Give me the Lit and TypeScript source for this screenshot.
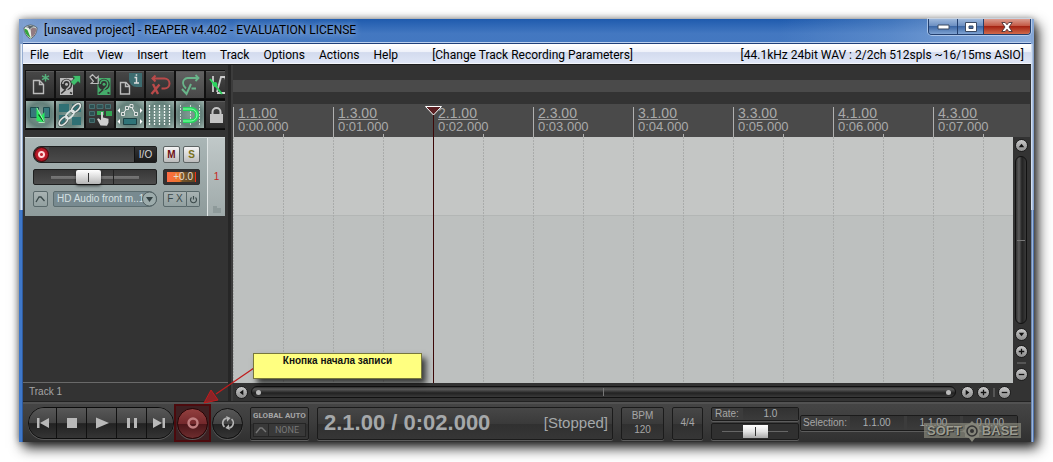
import { LitElement, html, css, svg, nothing } from "lit";
import { customElement, state } from "lit/decorators.js";

const MENUS = ["File", "Edit", "View", "Insert", "Item", "Track", "Options", "Actions", "Help"];

const MARKS = [
  ["1.1.00", "0:00.000"],
  ["1.3.00", "0:01.000"],
  ["2.1.00", "0:02.000"],
  ["2.3.00", "0:03.000"],
  ["3.1.00", "0:04.000"],
  ["3.3.00", "0:05.000"],
  ["4.1.00", "0:06.000"],
  ["4.3.00", "0:07.000"],
];

const disk = (x: number, c: string) => svg`
  <path d="M${x} 7h13v17h-13z" fill=${c}/>
  <circle cx=${x + 6.5} cy="13.5" r="5.7" fill="#333"/>
  <path d="M${x + 2.800} 13a3.700 3.700 0 0 1 7.400 0q0 2.500-2.200 4l-3.500 3.500" fill="none" stroke=${c} stroke-width="1.500"/>
  <circle cx=${x + 6.5} cy="13.200" r="1.500" fill=${c}/>
  <path d="M${x + 1.200} 22.500l4.500-4M${x + 10} 21.500l2 1" stroke="#333" stroke-width="1.600"/>`;

const TOOLS = [
  [
    { name: "New project", look: "", icon: svg`
      <path d="M7.500 9.500h6l4 4v9h-10zM13.500 9.500v4h4" fill="none" stroke="#bbb" stroke-width="1.400"/>
      <path d="M19.500 3v7.500M16 4.900l7 3.800M23 4.900l-7 3.800" stroke="#55b07c" stroke-width="1.400"/>` },
    { name: "Open project", look: "", icon: svg`${disk(4, "#b9b9b9")}
      <path d="M14.500 11L18.500 7l-2.500-2.500h8.500V13l-2.500-2.500-4 4z" fill="#3fbf6c" stroke="#333" stroke-width=".6"/>` },
    { name: "Save project", look: "", icon: svg`${disk(11.500, "#45ad6b")}
      <path d="M4 6l2.500-2.300 3.700 3.700 2-2v7.100H5.200l2.200-2.200z" fill="#333" stroke="#bbb" stroke-width="1.200"/>` },
    { name: "Project settings", look: "", icon: svg`
      <path d="M13 2h13v14h-5.500A7.500 7.500 0 0 1 13 8.500z" fill="#3d6c70"/>
      <path d="M4.500 11.500h5.500l3.500 3.500v8h-9zM9.500 11.500v4h4" fill="none" stroke="#bbb" stroke-width="1.400"/>
      <path d="M18.500 6.500h2v5M18 12h5M19.700 4h1.500" stroke="#ddd" stroke-width="1.400" fill="none"/>` },
    { name: "Undo", look: "", icon: svg`
      <path d="M6 7.500h12.500a5 5 0 0 1 0 10h-3M9.500 4.500l-3 3 3 3" fill="none" stroke="#b94a4a" stroke-width="2"/>
      <path d="M7 13l5 10M13.500 13.500L5.500 23" stroke="#b94a4a" stroke-width="2.400"/>` },
    { name: "Redo", look: "soft", icon: svg`
      <path d="M22.500 7H11.500a5 5 0 0 0-4.500 5q0 3 3 5.500M19.500 4l3 3-3 3" fill="none" stroke="#69b58a" stroke-width="1.800"/>
      <path d="M6 18l4.500 5 4.500-10M15.500 17.500h4.500" fill="none" stroke="#69b58a" stroke-width="2"/>` },
    { name: "Metronome", look: "", icon: svg`
      <path d="M7 5v16M11 21L15 6h4l5 16H11" fill="none" stroke="#ccc" stroke-width="1.800"/>
      <path d="M4 8l12 15" stroke="#2ed45f" stroke-width="2"/><circle cx="9" cy="13.500" r="2.400" fill="#2ed45f"/>` },
  ],
  [
    { name: "Auto-crossfade", look: "lit", icon: svg`
      <path d="M4.500 6.500h8v10h-8zM17.500 6.500h6v10h-6z" fill="#38777b" stroke="#1f4a4d"/>
      <path d="M10.500 6l5 8.500 3-3.500v10.500l-8-1.500z" fill="#27e85d"/>
      <path d="M12.500 13.500l6 8" stroke="#123a1c" stroke-width="1.200"/>
      <path d="M11 7l7.500 14.500h-6" fill="none" stroke="#b5ffc8" stroke-width=".8"/>` },
    { name: "Item grouping", look: "lit", icon: svg`
      <path d="M3 3h10v8H3zM16 3h9v8h-9zM3 14h6v10H3zM16 16h9v8h-9z" fill="#2f7074"/>
      <g fill="none" stroke="#4a5a57" stroke-width="3">
      <ellipse cx="20" cy="7" rx="5.500" ry="2.800" transform="rotate(-45 20 7)"/>
      <ellipse cx="7.500" cy="20" rx="5.500" ry="2.800" transform="rotate(-45 7.500 20)"/></g>
      <g fill="none" stroke="#dfe6e4" stroke-width="1.700">
      <ellipse cx="20" cy="7" rx="5.500" ry="2.800" transform="rotate(-45 20 7)"/>
      <ellipse cx="14" cy="13.500" rx="5" ry="2.600" transform="rotate(-45 14 13.500)"/>
      <ellipse cx="7.500" cy="20" rx="5.500" ry="2.800" transform="rotate(-45 7.500 20)"/></g>` },
    { name: "Ripple editing", look: "", icon: svg`
      <path d="M3.500 3.500h5v4h-5zM11 3.500h6v4h-6zM19.500 3.500h5v4h-5zM3.500 10.500h5v4h-5zM3.500 17.500h5v4h-5z" fill="#2d5052" stroke="#4c7b7c" stroke-width=".8"/>
      <path d="M11 10h7v4h-7zM20 10h6v5h-6z" fill="#34a755"/>
      <path d="M14.500 24.500l-3.500-6.500 1.500-.8 2.500 2V11h2v5.500l5.500 1.200v4l-1.500 3z" fill="#cfcfcf"/>` },
    { name: "Move envelope points", look: "lit", icon: svg`
      <path d="M7 13l4-6 4-2 4 7" fill="none" stroke="#eee" stroke-width="1"/>
      <path d="M5.500 11.500h3v3h-3zM9.500 5.500h3v3h-3zM14 3.500h3v3h-3zM18.500 11.500h3v3h-3z" fill="#5e7873" stroke="#eee" stroke-width=".9"/>
      <path d="M4 7v5L1.500 9.500zM24 7v5l2.500-2.500zM4 18v5l-2.500-2.500zM24 18v5l2.500-2.500z" fill="#fff"/>
      <path d="M7.500 17.500h13v6h-13z" fill="#2f7478" stroke="#1d4144"/>` },
    { name: "Grid lines", look: "lit", icon: svg`
      <path d="M3.500 4v21M8.500 4v21M13.500 4v21M18.500 4v21M23.500 4v21" stroke="#f2f6f4" stroke-width="1.300" stroke-dasharray="2 1"/>` },
    { name: "Snap", look: "lit", icon: svg`
      <path d="M4.500 4v21M14.500 4v21M23.500 4v21" stroke="#c8dcd2" stroke-dasharray="2 1"/>
      <path d="M7 8h8a6 6 0 0 1 0 12H7" fill="none" stroke="#22d85b" stroke-width="4"/>
      <path d="M7 8h8a6 6 0 0 1 0 12H7" fill="none" stroke="#8dffb0" stroke-width="1"/>` },
    { name: "Lock", look: "", icon: svg`
      <path d="M6.500 14v-3a4 4 0 0 1 8 0v3" fill="none" stroke="#c4c4c4" stroke-width="2"/>
      <path d="M4 13h13v9H4z" fill="#c4c4c4"/>` },
  ],
];

const TRANSPORT = [
  { name: "Go to start", icon: svg`<path d="M8 8h2.500v10H8zM20 8v10l-9-5z"/>` },
  { name: "Stop", icon: svg`<path d="M9 8h10v10H9z"/>` },
  { name: "Play", icon: svg`<path d="M8 7.500v11l13-5.500z"/>` },
  { name: "Pause", icon: svg`<path d="M9 8h3v10H9zM16 8h3v10h-3z"/>` },
  { name: "Go to end", icon: svg`<path d="M6 8v10l9-5zM15.500 8H18v10h-2.500z"/>` },
];

const GLYPHS: Record<string, string> = {
  left: "M8 3v6L4 6z",
  right: "M4 3v6l4-3z",
  up: "M3 8h6L6 4z",
  down: "M3 4h6L6 8z",
  plus: "M5.300 3h1.400v2.300H9v1.400H6.700V9H5.300V6.700H3V5.300h2.300z",
  minus: "M3 5.300h6v1.400H3z",
};

@customElement("round-button")
class RoundButton extends LitElement {
  static properties = { kind: {}, name: {} };
  kind!: string;
  name!: string;
  static styles = css`
    :host { display: flex; }
    .btn { width: 13px; height: 13px; padding: 0; border: 1px solid #1d1d1d; border-radius: 50%;
      background: linear-gradient(#c9c9c9, #8c8c8c); display: grid; place-items: center; }
    .glyph { display: block; width: 11px; height: 11px; }
  `;
  render() {
    return html`<button class="btn" aria-label=${this.name}>
      <svg class="glyph" viewBox="0 0 12 12"><path d=${GLYPHS[this.kind]} fill="#111"/></svg>
    </button>`;
  }
}

@customElement("track-panel")
class TrackPanel extends LitElement {
  static styles = css`
    :host { display: flex; height: 79px; box-sizing: border-box; border-top: 1px solid #cfd6d6;
      font: 10px/14px "Liberation Sans", Arial, sans-serif; }
    .controls { flex: 1; display: grid; grid-template-columns: 124px 37px; grid-template-rows: 17px 16px 16px;
      gap: 6px; padding: 8px 6px 9px 8px; background: linear-gradient(#aab6b6, #8e9b9b); }
    .strip { width: 18px; border-left: 1px solid #dfe5e5; background: linear-gradient(#c0c8c8, #9faaaa);
      display: flex; flex-direction: column; align-items: center; justify-content: space-between;
      padding-top: 32px; box-sizing: border-box; color: #c8241c; }
    .folder { display: block; width: 10px; height: 12px; }
    button, select, input { font: inherit; margin: 0; box-sizing: border-box; }
    .name-row { display: flex; border: 1px solid #1d1f1f; border-radius: 8px 2px 2px 8px; background: #474747; overflow: hidden; }
    .arm { width: 15px; height: 15px; padding: 0; border: 1px solid #4a0508; border-radius: 50%;
      background: radial-gradient(circle, #c22a36 0 1px, #ffd9d9 2px 3px, #bf1f2c 4px, #8f0c18); }
    .name { flex: 1; min-width: 0; border: 0; background: linear-gradient(#3a3a3a, #4b4b4b); color: #ddd; padding: 0 4px; }
    .io { width: 22px; padding: 0; border: 0; border-left: 1px solid #111; background: linear-gradient(#333, #1b1b1b); color: #d8d8d8; }
    .pair { display: flex; justify-content: space-between; }
    .square { width: 17px; padding: 0; border: 1px solid #5d6464; border-radius: 2px;
      background: linear-gradient(#f4f4f4, #bdbdbd); font-weight: bold; color: #6e1015; }
    .solo { color: #77701c; }
    .fader { appearance: none; width: 100%; height: 16px; border: 1px solid #1e2020; border-radius: 2px;
      background: linear-gradient(90deg, #222, #222) 79px 0 / 1px 100% no-repeat,
        linear-gradient(#777, #6a6a6a) 50% 50% / 88px 3px no-repeat, linear-gradient(#383838, #4d4d4d);
      padding: 0 16px 0 14px; }
    .fader::-webkit-slider-thumb { appearance: none; width: 25px; height: 14px; border: 0; border-radius: 2px;
      box-shadow: 0 2px 3px rgba(0, 0, 0, 0.6);
      background: linear-gradient(#333, #333) 50% 50% / 1px 9px no-repeat, linear-gradient(#fff, #dcdcdc 50%, #b5b5b5); }
    .meter { border: 1px solid #2b2e2e; border-radius: 2px; padding: 2px 3px; background: #343030; display: flex; }
    .level { flex: 1; border-right: 1px solid #f03018; color: #e5dccb; line-height: 10px; text-align: right; padding-right: 2px;
      background: linear-gradient(90deg, #ff6a44, #e8792c 45%, #75542a 55%, #5a4523); }
    .bottom { display: flex; gap: 5px; }
    .plain { padding: 0; border: 1px solid #59686a; border-radius: 2px; background: linear-gradient(#a9b3b3, #92a0a0); color: #3c4a4b; }
    .env { width: 15px; display: grid; place-items: center; }
    .device { position: relative; flex: 1; display: flex; min-width: 0; }
    .input { appearance: none; width: 100%; border: 1px solid #5c6d70; border-radius: 2px 8px 8px 2px;
      background: #788a90; color: #d5e0e2; padding: 0 0 0 3px; }
    .drop { position: absolute; right: 0; top: 0; pointer-events: none; width: 16px; height: 16px; }
    .fx { width: 24px; border-radius: 2px 0 0 2px; }
    .power { width: 13px; border-left: 0; border-radius: 0 2px 2px 0; display: grid; place-items: center; }
    svg { display: block; }
  `;
  render() {
    return html`
      <div class="controls">
        <div class="name-row">
          <button class="arm" aria-label="Record arm"></button>
          <input class="name" aria-label="Track name" />
          <button class="io">I/O</button>
        </div>
        <div class="pair">
          <button class="square">M</button>
          <button class="square solo">S</button>
        </div>
        <input class="fader" type="range" min="0" max="100" value="42" aria-label="Volume" />
        <div class="meter"><div class="level">+0.0</div></div>
        <div class="bottom">
          <button class="plain env" aria-label="Envelopes">
            <svg width="11" height="8" viewBox="0 0 11 8"><path d="M1 7l3-5h2l3.500 4" fill="none" stroke="#3c4a4b" stroke-width="1.300"/></svg>
          </button>
          <div class="device">
            <select class="input" aria-label="Input device"><option>HD Audio front m..1</option></select>
            <svg class="drop" viewBox="0 0 16 16"><circle cx="8.500" cy="8" r="7" fill="#9cabab" stroke="#526062"/><path d="M5 6h7l-3.500 5z" fill="#354244"/></svg>
          </div>
        </div>
        <div class="pair">
          <button class="plain fx">F X</button>
          <button class="plain power" aria-label="Bypass effects">
            <svg width="9" height="9" viewBox="0 0 9 9"><path d="M2.500 2.500a3 3 0 1 0 4 0M4.500 1v3.500" fill="none" stroke="#3c4a4b" stroke-width="1.200"/></svg>
          </button>
        </div>
      </div>
      <div class="strip">
        <span>1</span>
        <svg class="folder" viewBox="0 0 10 12"><path d="M1 2h4v2h4v5H1z" fill="#8e9a9a"/></svg>
      </div>`;
  }
}

@customElement("transport-bar")
class TransportBar extends LitElement {
  static styles = css`
    :host { display: flex; align-items: center; gap: 8px; height: 40px; box-sizing: border-box; padding: 0 13px 0 5px;
      border-top: 2px solid #525252; background: linear-gradient(#454545, #3c3c3c 50%, #303030);
      font: 10px/14px "Liberation Sans", Arial, sans-serif; color: #a6a6a6; }
    button, input { font: inherit; color: inherit; margin: 0; box-sizing: border-box; }
    .keys { display: flex; align-items: center; }
    .bank { display: flex; height: 32px; box-sizing: border-box; border: 1px solid #0d0d0d; border-radius: 16px; overflow: hidden;
      box-shadow: 0 1px #5a5a5a; }
    .key { width: 30px; padding: 0; border: 0; border-left: 1px solid #111; display: grid; place-items: center;
      background: linear-gradient(#585858, #434343 50%, #222 52%, #353535); }
    .key:first-child { border-left: 0; width: 27px; }
    .key:last-child { width: 27px; }
    .key svg { display: block; width: 28px; height: 26px; fill: #b9b9b9; }
    .frame { margin-right: 1px; width: 37px; height: 38px; box-sizing: border-box; border: 2px solid #4c0a0d; background: #3e2022; display: grid; place-items: center; }
    .round { width: 31px; height: 31px; padding: 0; border: 1px solid #111; border-radius: 50%; display: grid; place-items: center;
      background: linear-gradient(#585858, #434343 50%, #222 52%, #353535); box-shadow: 0 1px #5a5a5a; }
    .record { border-color: #260506; background: linear-gradient(#93403f, #74292c 50%, #4c1619 52%, #6e2d2f); }
    .box { box-sizing: border-box; height: 33px; border: 1px solid #1b1b1b; border-radius: 2px; box-shadow: 0 1px #5c5c5c;
      background: linear-gradient(#474747, #3a3a3a 50%, #303030 52%, #363636); }
    .auto { width: 59px; margin-left: -1px; padding: 2px; display: grid; align-content: space-between; justify-items: stretch;
      font: 700 8px/11px Roboto, sans-serif; text-align: center; white-space: nowrap; }
    .mode { padding: 0; height: 14px; border: 1px solid #252525; background: #393939; color: #777; display: flex; line-height: 12px; font-size: 9px; font-weight: 400; }
    .mode svg { width: 14px; height: 12px; border-right: 1px solid #252525; }
    .mode span { flex: 1; }
    .time { flex: 1; display: flex; justify-content: space-between; align-items: center; padding: 0 4px 0 6px; color: #a5a8aa; white-space: nowrap; }
    .clock { font-weight: bold; font-size: 22px; line-height: 28px; }
    .state { font-size: 15px; line-height: 24px; }
    .bpm { width: 43px; padding: 1px 0; display: grid; text-align: center; }
    .sig { width: 31px; padding: 0; }
    .rate { display: grid; gap: 2px; width: 88px; }
    .rate-row, .selection { box-sizing: border-box; border: 1px solid #1b1b1b; border-radius: 2px; box-shadow: 0 1px #5c5c5c; display: flex; background: #3c3c3c; }
    .rate-row { height: 14px; padding-left: 3px; line-height: 12px; gap: 4px; }
    .value { flex: 1; min-width: 0; width: 0; border: 0; padding: 0; text-align: center; background: linear-gradient(#323232, #3b3b3b); color: #a9adb0; }
    .speed { appearance: none; width: 100%; height: 17px; border: 1px solid #1b1b1b; border-radius: 2px; padding: 0 9px;
      background: linear-gradient(#666, #666) 50% 50% / 66px 1px no-repeat, #303030; box-shadow: 0 1px #5c5c5c; }
    .speed::-webkit-slider-thumb { appearance: none; width: 25px; height: 13px; border: 0;
      background: linear-gradient(#333, #333) 50% 50% / 1px 9px no-repeat, linear-gradient(#fff, #e4e4e4 50%, #aaa); }
    .selection { width: 218px; height: 16px; padding-left: 2px; gap: 3px; line-height: 14px; margin-left: -7px; }
  `;
  render() {
    return html`
      <div class="keys">
        <div class="bank">
          ${TRANSPORT.map((k) => html`<button class="key" aria-label=${k.name}><svg viewBox="0 0 28 26">${k.icon}</svg></button>`)}
        </div>
        <div class="frame">
          <button class="round record" aria-label="Record">
            <svg width="14" height="14" viewBox="0 0 14 14"><circle cx="7" cy="7" r="4.500" fill="none" stroke="#c07f80" stroke-width="2.400"/></svg>
          </button>
        </div>
        <button class="round" aria-label="Repeat">
          <svg width="16" height="16" viewBox="0 0 18 18">
            <path d="M5 13.500A6 6 0 0 1 7.500 3.300M13 4.500A6 6 0 0 1 10.500 14.700" fill="none" stroke="#b5b5b5" stroke-width="1.800"/>
            <path d="M7 1l5 2.500-4 4zM11 17l-5-2.500 4-4z" fill="#b5b5b5"/>
          </svg>
        </button>
      </div>
      <div class="box auto">
        <span>GLOBAL AUTO</span>
        <button class="mode">
          <svg viewBox="0 0 14 12"><path d="M2 9l4-5h2l4 4" fill="none" stroke="#777" stroke-width="1.400"/></svg><span>NONE</span>
        </button>
      </div>
      <div class="box time"><span class="clock">2.1.00 / 0:02.000</span><span class="state">[Stopped]</span></div>
      <div class="box bpm"><span>BPM</span><span>120</span></div>
      <button class="box sig">4/4</button>
      <div class="rate">
        <div class="rate-row"><label for="rate">Rate:</label><input class="value" id="rate" value="1.0" /></div>
        <input class="speed" type="range" min="0" max="100" value="50" aria-label="Play rate" />
      </div>
      <div class="selection">
        <label for="sel-start">Selection:</label>
        <input class="value" id="sel-start" value="1.1.00" />
        <input class="value" aria-label="Selection end" value="1.1.00" />
        <input class="value" aria-label="Selection length" value="0.0.00" />
      </div>`;
  }
}

@customElement("app-root")
class AppRoot extends LitElement {
  @state() private cursor = 200;

  static styles = css`
    :host { display: flex; box-sizing: border-box; min-height: 100vh; padding: 19px 19px 20px; background: #fff;
      font: 10px/14px "Liberation Sans", Arial, sans-serif; }
    button { font: inherit; }
    .window { position: relative; flex: 1; min-width: 0; display: flex; flex-direction: column; padding: 0 3px 0 4px;
      background: linear-gradient(90deg, #7f9fce, #3c70b9 10%, #1f5bae 32% 75%, #3f74bb 86%, #86a7d6) top / 100% 25px no-repeat,
        linear-gradient(90deg, #8d9cb4 1px, #e4edf8 2px 3px, #4a6ea8 4px, transparent 4px) 0 25px / 100% 166px no-repeat,
        linear-gradient(90deg, transparent calc(100% - 3px), #e4edf8 0, #7896c4) 0 25px / 100% 166px no-repeat,
        linear-gradient(90deg, #3f78c9 3px, #1d3c70 4px, #1d3c70 calc(100% - 3px), #c0d4f0 calc(100% - 2px), #2c5596);
      box-shadow: 0 0 7px rgba(0, 0, 0, 0.4), 4px 6px 12px rgba(0, 0, 0, 0.85); }
    .title { display: flex; align-items: center; height: 25px; box-sizing: border-box; border-bottom: 1px solid #20407a; gap: 6px;
      background: linear-gradient(transparent, rgba(150, 185, 235, 0.3) 60% 95%, #bcd0ee 96%); }
    .logo { width: 15px; height: 15px; }
    .caption { margin: 0; flex: 1; font: 12px/16px Roboto, "Open Sans", sans-serif; color: #000; text-shadow: 0 0 6px #cfe0f8; white-space: nowrap;
      padding-bottom: 2px; }
    .wincontrols { align-self: flex-start; display: flex; height: 16px; box-sizing: border-box; border: 1px solid #23406f; border-top: 0;
      border-radius: 0 0 4px 4px; overflow: hidden; box-shadow: 0 0 0 1px rgba(215, 230, 250, 0.6); }
    .wc { padding: 0; border: 0; width: 28px; display: grid; place-items: center; background: linear-gradient(#9db8dc, #6d90c2 45%, #3d68a6 50%, #7ea2d2); }
    .wc + .wc { border-left: 1px solid #23406f; }
    .max { width: 26px; }
    .close { width: 47px; background: linear-gradient(#dc9d90, #c45a46 45%, #a52413 50%, #d16a4c); }
    .menu { display: flex; align-items: center; height: 21px; box-sizing: border-box; gap: 14px; padding: 2px 7px 0;
      border-top: 1px solid #fff; border-bottom: 2px solid #f4f6fb; font: 12px/16px Roboto, "Open Sans", sans-serif; white-space: nowrap;
      background: linear-gradient(#fff, #eef1fa 38%, #d3dbee 42%, #dfe6f6); color: #000; }
    .menu-item { padding: 0; border: 0; background: none; color: inherit; }
    .hint { margin-left: 20px; }
    .audio { margin-left: auto; }
    .main { flex: 1; display: grid; grid-template-columns: 205px 5px minmax(0, 1fr); grid-template-rows: 72px minmax(180px, 1fr) 18px;
      background: #333; border-top: 1px solid #1d1d1d; margin-top: -1px; border-bottom: 1px solid #222; }
    .tools { grid-column: 1; grid-row: 1; padding: 5px 3px 0 2px; display: grid; grid-template-columns: minmax(0, 1fr); align-content: start; }
    .row { display: flex; overflow: hidden; border-bottom: 1px solid #0a0a0a; height: 30px; box-sizing: border-box; }
    .tool { flex: none; box-sizing: border-box; width: 30px; height: 29px; padding: 0; border: 1px solid #111; background: linear-gradient(#484848, #2b2b2b);
      box-shadow: inset 0 1px #5a5a5a; display: grid; place-items: center; }
    .soft { background: linear-gradient(#626262, #484848); }
    .lit { background: radial-gradient(#7f9c94, #64807a 60%, #9fb3ad); box-shadow: none; }
    .tool svg { display: block; width: 28px; height: 28px; }
    .divider { grid-column: 2; grid-row: 1 / 4; background: linear-gradient(90deg, #262626 3px, #3c3c3c 3px); }
    .panel { grid-column: 1; grid-row: 2; padding: 0 3px 0 2px; border-bottom: 1px solid #6a6a6a; }
    .timeline { grid-column: 3; grid-row: 1 / 3; position: relative; display: grid; grid-template-columns: minmax(0, 1fr) 18px; grid-template-rows: 72px minmax(0, 1fr); }
    .head { grid-column: 1 / 3; padding-top: 15px; display: flex; flex-direction: column; gap: 12px; margin-right: 1px; overflow: hidden; }
    .regions { height: 12px; background: #4a4a4a; flex: none; }
    .ruler { flex: 1; display: flex; background: #4a4a4a; padding-top: 3px; }
    .mark { flex: none; width: 100px; box-sizing: border-box; border-left: 1px solid #b0b0b0; padding-left: 4px; color: #a9a9a9;
      display: flex; flex-direction: column; align-items: flex-start;
      background: linear-gradient(#b0b0b0, #b0b0b0) 49px 100% / 1px 3px no-repeat; }
    .beat { font-size: 14px; line-height: 12px; border-bottom: 1px solid #a0a0a0; padding-right: 1px; }
    .clock { font-size: 13px; line-height: 14px; }
    .canvas { display: block; width: 100%; height: 100%; background: linear-gradient(#c4c6c5 78px, #b3b6b5 78px 79px, #bdc0bf 79px); }
    .cursor { position: absolute; top: 41px; width: 17px; height: calc(100% - 41px); margin-left: -8px; overflow: hidden; }
    .vscroll { display: flex; flex-direction: column; align-items: center; gap: 4px; padding: 2px 2px 2px 0; }
    .hscroll { grid-column: 3; grid-row: 3; display: flex; align-items: center; gap: 3px; padding: 0 20px 0 2px; }
    .rail { flex: 1; border: 1px solid #111; border-radius: 7px; display: flex; align-items: center; justify-content: space-between; }
    .across { height: 10px; padding: 0 4px; margin-right: 2px; background: linear-gradient(#333, #5c5c5c 20%, #222 60%, #3a3a3a); }
    .down { width: 10px; background: linear-gradient(90deg, #333, #5c5c5c 30%, #222 60%, #3a3a3a); justify-content: center; }
    .knob { width: 5px; height: 5px; border-radius: 50%; background: #bbb; }
    .grip { width: 1px; height: 8px; background: #777; }
    .flat { width: 8px; height: 1px; }
    .bar-v { width: 2px; height: 9px; background: #555; }
    .bar-h { width: 9px; height: 2px; background: #555; }
    .status { grid-column: 1; grid-row: 3; padding: 2px 6px 0; color: #a5a5a5; }
    .callout { position: absolute; left: 234px; bottom: 63px; width: 169px; height: 26px; box-sizing: border-box; border: 1px solid #77773c;
      background: #ffff80; color: #111; font-weight: bold; text-align: center; line-height: 14px; box-shadow: 4px 5px 6px rgba(0, 0, 0, 0.7); }
    .arrow { position: absolute; left: 183px; bottom: 38px; width: 54px; height: 44px; }
    .watermark { position: absolute; right: 13px; bottom: 4px; width: 97px; height: 15px; display: flex; align-items: center; justify-content: space-between;
      box-sizing: border-box; padding: 0 3px; background: rgba(145, 145, 130, 0.65); color: rgba(205, 205, 190, 0.7); font: bold 13px/14px "Liberation Sans", sans-serif; text-shadow: 0 0 2px #222, 1px 1px #333; }
    .watermark svg { width: 18px; height: 18px; overflow: visible; }
  `;

  render() {
    return html`
      <div class="window">
        <header class="title">
          <svg class="logo" viewBox="0 0 16 16">
            <path d="M1 4Q8-2 15 4q0 8-7 12Q1 12 1 4z" fill="#e9efe9" stroke="#58646b"/>
            <path d="M1.500 5q3 0 4 3t3 7Q2 12 1.500 5z" fill="#35a33c"/>
            <path d="M8 5q4-2 6.500 0Q14 11 9 14.500z" fill="#917a80"/><path d="M3 3.500Q8 0 13 3.500 8 3 7.500 6 6 3 3 3.500z" fill="#56626a"/>
          </svg>
          <h1 class="caption">[unsaved project] - REAPER v4.402 - EVALUATION LICENSE</h1>
          <div class="wincontrols">
            <button class="wc" aria-label="Minimize"><svg width="13" height="6" viewBox="0 0 13 6"><path d="M1 1h11v4H1z" fill="#fff" stroke="#3b4a63"/></svg></button>
            <button class="wc max" aria-label="Maximize"><svg width="12" height="10" viewBox="0 0 12 10"><path d="M.5.5h11v9H.5zM4 4v2.500h4V4z" fill="#fff" fill-rule="evenodd" stroke="#3b4a63"/></svg></button>
            <button class="wc close" aria-label="Close"><svg width="12" height="10" viewBox="0 0 12 10"><path d="M.8.500h3.400L6 2.800 7.800.500h3.400L8 5l3.200 4.500H7.800L6 7.200 4.200 9.500H.8L4 5z" fill="#fff" stroke="#4a3338" stroke-width=".9"/></svg></button>
          </div>
        </header>
        <nav class="menu">
          ${MENUS.map((m) => html`<button class="menu-item">${m}</button>`)}
          <span class="hint">[Change Track Recording Parameters]</span>
          <span class="audio">[44.1kHz 24bit WAV : 2/2ch 512spls ~16/15ms ASIO]</span>
        </nav>
        <main class="main">
          <div class="tools">
            ${TOOLS.map((row) => html`<div class="row">
              ${row.map((t) => html`<button class="tool ${t.look}" aria-label=${t.name}><svg viewBox="0 0 28 28">${t.icon ?? nothing}</svg></button>`)}
            </div>`)}
          </div>
          <div class="divider"></div>
          <section class="timeline">
            <div class="head">
              <div class="regions"></div>
              <div class="ruler">
                ${MARKS.map(([beat, clock]) => html`<div class="mark"><span class="beat">${beat}</span><span class="clock">${clock}</span></div>`)}
              </div>
            </div>
            <svg class="canvas">
              <defs><pattern id="grid" width="50" height="3" patternUnits="userSpaceOnUse"><path d="M0 0h1v2H0z" fill="#a9abaa"/></pattern></defs>
              <rect width="100%" height="100%" fill="url(#grid)"/>
            </svg>
            <div class="vscroll">
              <round-button .kind=${"up"} .name=${"Scroll up"}></round-button>
              <div class="rail down"><span class="grip flat"></span></div>
              <round-button .kind=${"down"} .name=${"Scroll down"}></round-button>
              <round-button .kind=${"plus"} .name=${"Zoom in vertically"}></round-button>
              <span class="bar-h"></span>
              <round-button .kind=${"minus"} .name=${"Zoom out vertically"}></round-button>
            </div>
            <svg class="cursor" style="left:${this.cursor}px">
              <path d="M8 0h1v900H8z" fill="#3c0808"/>
              <path d="M.500.500h16L8.500 9z" fill="#5a1f22" stroke="#fff"/>
            </svg>
          </section>
          <div class="panel"><track-panel></track-panel></div>
          <div class="status">Track 1</div>
          <div class="hscroll">
            <round-button .kind=${"left"} .name=${"Scroll left"}></round-button>
            <div class="rail across"><span class="knob"></span><span class="grip"></span><span class="knob"></span></div>
            <round-button .kind=${"right"} .name=${"Scroll right"}></round-button>
            <round-button .kind=${"plus"} .name=${"Zoom in"}></round-button>
            <span class="bar-v"></span>
            <round-button .kind=${"minus"} .name=${"Zoom out"}></round-button>
          </div>
        </main>
        <transport-bar></transport-bar>
        <svg class="arrow" viewBox="0 0 54 44"><path d="M52 8L14 34" stroke="#c01c1c" stroke-width="1.300"/><path d="M2 43L9 30l7 10z" fill="#8c2327" stroke="#c01c1c"/></svg>
        <div class="callout">Кнопка начала записи</div>
        <div class="watermark"><span>SOFT</span>
          <svg viewBox="0 0 18 18"><path d="M9-1l3 3 4 1v4l3 2-3 2v4l-4 1-3 4-3-4-4-1v-4l-3-2 3-2V3l4-1z" fill="#85857a"/><circle cx="9" cy="9" r="5" fill="none" stroke="#333" stroke-width="1.500"/><circle cx="9" cy="9" r="2" fill="#333"/></svg>
          <span>BASE</span></div>
      </div>`;
  }
}
